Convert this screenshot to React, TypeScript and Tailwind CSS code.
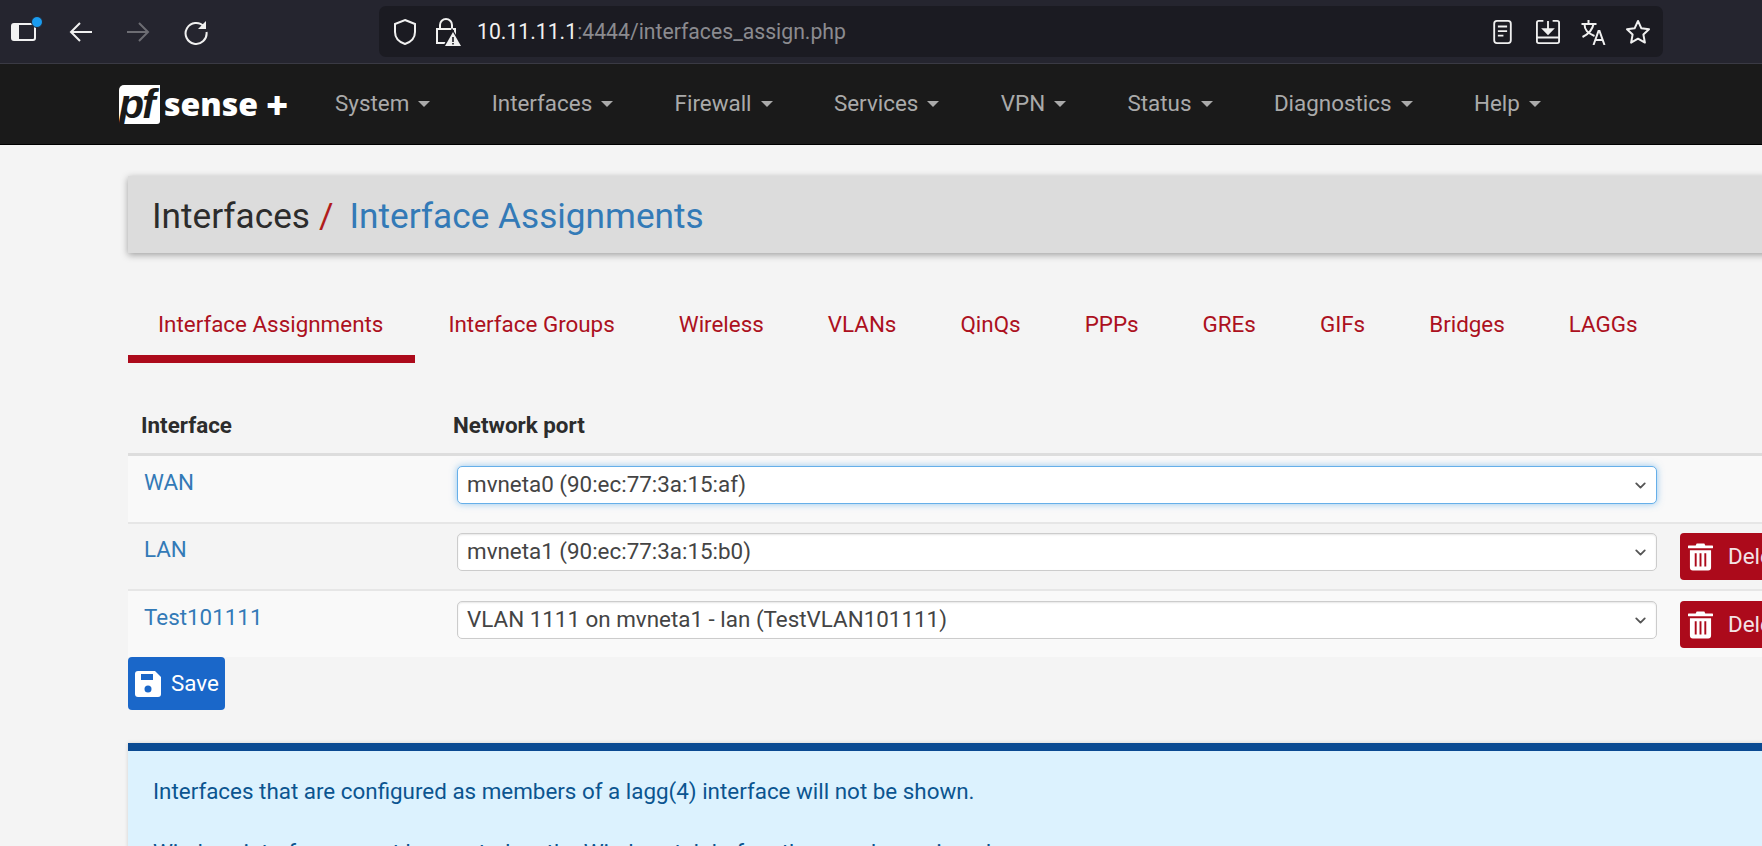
import React from "react";
import { ChevronDown } from "lucide-react";

const navItems = ["System", "Interfaces", "Firewall", "Services", "VPN", "Status", "Diagnostics", "Help"];

const tabs = ["Interface Groups", "Wireless", "VLANs", "QinQs", "PPPs", "GREs", "GIFs", "Bridges", "LAGGs"];

function Select({ value, focus }: { value: string; focus?: boolean }) {
  return (
    <div
      className={
        "flex h-[38px] w-[1200px] shrink-0 items-center justify-between rounded-[5px] bg-white pl-[9px] pr-[7px] text-[22.4px] text-[#444] " +
        (focus
          ? "border border-[#66afe9] shadow-[0_0_7px_rgba(102,175,233,0.7)]"
          : "border border-[#ccc] shadow-[inset_0_1px_2px_rgba(0,0,0,0.1)]")
      }
    >
      <span>{value}</span>
      <ChevronDown size={17} strokeWidth={2.6} className="text-[#555]" />
    </div>
  );
}

function DeleteButton() {
  return (
    <div className="ml-[23px] flex h-[47px] w-[120px] shrink-0 items-center gap-[15px] rounded-[4px] bg-[#ac0a1b] pl-[8px] text-[22.4px] text-[#f3e3e5]">
      <svg width="25" height="30" viewBox="0 0 26 30">
        <path fill="#fff" d="M9 1h8l1 2h7a1 1 0 0 1 0 3H1a1 1 0 0 1 0-3h7zM2 8h22v18a3 3 0 0 1-3 3H5a3 3 0 0 1-3-3z" />
        <path stroke="#ac0a1b" strokeWidth="2" d="M8 11v14M13 11v14M18 11v14" />
      </svg>
      <span>Delete</span>
    </div>
  );
}

export default function App() {
  return (
    <div className="h-[846px] w-[1762px] overflow-hidden bg-[#f4f4f4] font-['Roboto',sans-serif]">
      {/* browser toolbar */}
      <div className="flex h-[64px] items-center border-b border-[#3a3a44] bg-[#25252f]">
        <div className="relative ml-[11px] h-[18px] w-[25px]">
          <div className="absolute inset-0 rounded-[3px] border-2 border-l-[8px] border-[#f2f2f2]" />
          <div className="absolute right-[-7px] top-[-7px] h-[12px] w-[12px] rounded-full border border-[#25252f] bg-[#1a9cf0]" />
        </div>
        <svg className="ml-[32px]" width="26" height="26" viewBox="0 0 26 26" fill="none" stroke="#f0f0f0" strokeWidth="2">
          <path d="M24 13H3M12 4l-9 9 9 9" />
        </svg>
        <svg className="ml-[31px]" width="26" height="26" viewBox="0 0 26 26" fill="none" stroke="#6d6d73" strokeWidth="2">
          <path d="M2 13h21M14 4l9 9-9 9" />
        </svg>
        <svg className="ml-[32px]" width="26" height="26" viewBox="0 0 26 26" fill="none" stroke="#f0f0f0" strokeWidth="2">
          <path d="M21 7.5A10.5 10.5 0 1 0 23.5 13" />
          <path fill="#f0f0f0" stroke="none" d="M23 2v8h-8z" />
        </svg>
        <div className="ml-[170px] flex h-[51px] w-[1284px] items-center rounded-[7px] bg-[#1b1b22] pl-[13px] text-[21.2px]">
          <svg width="26" height="28" viewBox="0 0 26 28" fill="none" stroke="#f0f0f0" strokeWidth="2">
            <path d="M13 2l10 4v8c0 6-4 10-10 12C7 24 3 20 3 14V6z" />
          </svg>
          <svg className="ml-[16px]" width="28" height="30" viewBox="0 0 28 30">
            <path fill="none" stroke="#f0f0f0" strokeWidth="2" d="M6 12V8a6 6 0 0 1 12 0v4M3 12h18v14H3z" />
            <path fill="#1b1b22" d="M18 11l11 19H9z" />
            <path fill="#f0f0f0" d="M19 15l8 14H11z" />
            <path fill="#1b1b22" d="M18.2 20h1.6v5h-1.6zM18.2 26h1.6v1.6h-1.6z" />
          </svg>
          <span className="ml-[15px] text-[#f0f0f0]">10.11.11.1</span>
          <span className="text-[#8b8b90]">:4444/interfaces_assign.php</span>
          <div className="ml-auto mr-[12px] flex items-center">
            <svg width="19" height="24" viewBox="0 0 20 26" fill="none" stroke="#f0f0f0" strokeWidth="2">
              <rect x="1" y="1" width="18" height="24" rx="3" />
              <path d="M5 7h10M5 12h10M5 17h6" />
            </svg>
            <svg className="ml-[23px]" width="26" height="24" viewBox="0 0 26 26" fill="none" stroke="#f0f0f0" strokeWidth="2">
              <path d="M8 1H3a2 2 0 0 0-2 2v20a2 2 0 0 0 2 2h20a2 2 0 0 0 2-2V3a2 2 0 0 0-2-2h-5M1 19h24" />
              <path d="M13 1v11" />
              <path fill="#f0f0f0" d="M8 10h10l-5 5z" />
            </svg>
            <svg className="ml-[19px]" width="26" height="26" viewBox="0 0 25 26" fill="none" stroke="#f0f0f0" strokeWidth="2">
              <path d="M1 5h15M8 1v4M4 5c0 6 3 9 10 12M13 5c-1 6-5 10-11 13" />
              <path d="M13 26l5-14h1l5 14M15 21h8" />
            </svg>
            <svg className="ml-[19px]" width="26" height="26" viewBox="0 0 26 26" fill="none" stroke="#f0f0f0" strokeWidth="2" strokeLinejoin="round">
              <path d="M13 2l3.4 7.3 7.6 1-5.6 5.3 1.5 8L13 19.7l-6.9 3.9 1.5-8L2 10.3l7.6-1z" />
            </svg>
          </div>
        </div>
      </div>

      {/* navbar */}
      <div className="flex h-[81px] items-center border-b border-black bg-[#1a1a1a] pl-[119px]">
        <div className="flex w-[216px] items-center">
          <div className="h-[39px] w-[41px] rounded-tl-[5px] rounded-br-[3px] bg-white font-['Liberation_Sans',sans-serif] text-[41px] font-bold italic leading-[39px] tracking-[-2px] text-[#1a1a1a]">
            pf
          </div>
          <span className="ml-[4px] font-['Open_Sans',sans-serif] text-[32px] font-extrabold leading-none tracking-[0px] text-white">sense</span>
          <span className="ml-[8px] font-['Open_Sans',sans-serif] text-[38px] font-extrabold leading-none text-white">+</span>
        </div>
        {navItems.map((n, i) => (
          <div key={n} className={"flex items-center text-[22.4px] text-[#aaaaaa] " + (i < navItems.length - 1 ? "mr-[61.4px]" : "")}>
            <span>{n}</span>
            <span className="ml-[9px] h-0 w-0 border-x-[6.5px] border-t-[6.5px] border-x-transparent border-t-[#aaa]" />
          </div>
        ))}
      </div>

      {/* page */}
      <div className="w-[1900px] pl-[128px] pt-[31px]">
        <div className="flex h-[77px] items-center bg-[#dcdcdc] pl-[24px] pt-[3px] text-[35.2px] shadow-[0_2px_7px_rgba(0,0,0,0.35)]">
          <span className="text-[#2c2c2c]">Interfaces</span>
          <span className="ml-[9px] text-[#b11c1c]">/</span>
          <span className="ml-[16px] text-[#337ab7]">Interface Assignments</span>
        </div>

        <div className="mt-[40px] flex h-[70px] text-[22.4px] text-[#ac1020]">
          <div className="mr-[1px] flex h-[70px] items-center border-b-[8px] border-[#ac0a1b] pl-[30px] pr-[32px] pt-[1px]">Interface Assignments</div>
          {tabs.map((t) => (
            <div key={t} className="flex h-[62px] items-center px-[32px] pt-[1px]">{t}</div>
          ))}
        </div>

        {/* table */}
        <div className="w-[1634px]">
          <div className="flex h-[93px] items-end border-b-[3px] border-[#dddddd] pb-[10px] text-[22.4px] font-bold text-[#2c2c2c]">
            <div className="w-[325px] pl-[13px]">Interface</div>
            <div>Network port</div>
          </div>
          <div className="flex h-[68px] border-b-2 border-[#e6e6e6] bg-[#f9f9f9] pt-[10px]">
            <div className="w-[329px] shrink-0 pl-[16px] text-[22.4px] text-[#337ab7]">WAN</div>
            <Select value="mvneta0 (90:ec:77:3a:15:af)" focus />
          </div>
          <div className="flex h-[67px] border-b-2 border-[#e6e6e6] bg-[#f4f4f4] pt-[9px]">
            <div className="w-[329px] shrink-0 pl-[16px] text-[22.4px] text-[#337ab7]">LAN</div>
            <Select value="mvneta1 (90:ec:77:3a:15:b0)" />
            <DeleteButton />
          </div>
          <div className="flex h-[66px] bg-[#f9f9f9] pt-[10px]">
            <div className="w-[329px] shrink-0 pl-[16px] text-[22.4px] text-[#337ab7]">Test101111</div>
            <Select value="VLAN 1111 on mvneta1 - lan (TestVLAN101111)" />
            <DeleteButton />
          </div>
        </div>

        <div className="flex h-[53px] w-[97px] items-center gap-[10px] rounded-[4px] bg-[#1a67c9] pl-[7px] text-[22.4px] text-white">
          <svg width="26" height="26" viewBox="0 0 26 26">
            <path fill="#fff" d="M3 0h17l6 6v17a3 3 0 0 1-3 3H3a3 3 0 0 1-3-3V3a3 3 0 0 1 3-3z" />
            <path fill="#1a67c9" d="M6 3h12v6H6z" />
            <circle cx="13" cy="18" r="3.5" fill="#1a67c9" />
          </svg>
          <span>Save</span>
        </div>

        <div className="mt-[33px] h-[300px] border-t-[8px] border-[#0a4a92] bg-[#dcf2fe] pl-[25px] pt-[24px] text-[22.4px] leading-[32px] text-[#0b5590] shadow-[0_0_4px_rgba(0,0,0,0.15)]">
          <p>Interfaces that are configured as members of a lagg(4) interface will not be shown.</p>
          <p className="mt-[29px]">Wireless interfaces must be created on the Wireless tab before they can be assigned.</p>
        </div>
      </div>
    </div>
  );
}
